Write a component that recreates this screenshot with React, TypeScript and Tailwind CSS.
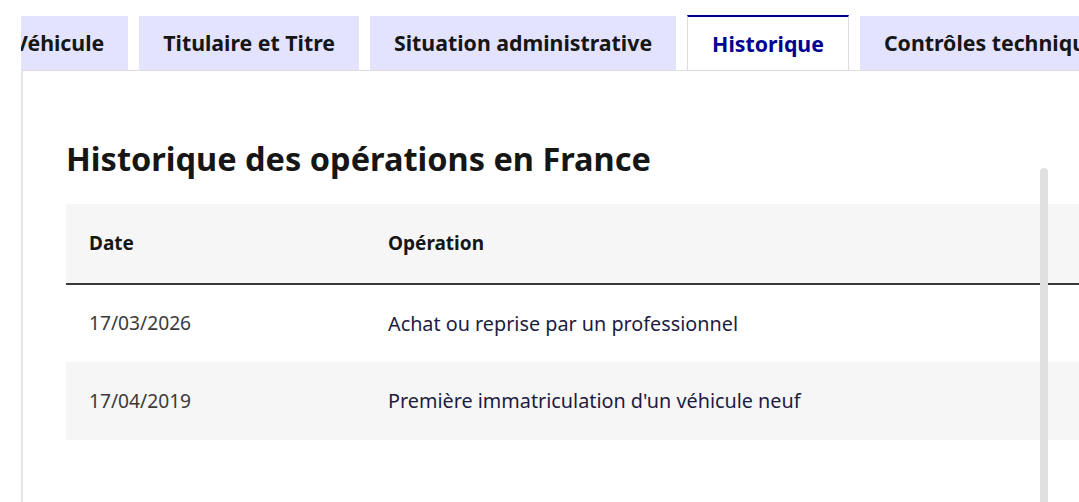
const tabs = [
  { label: "Véhicule", active: false },
  { label: "Titulaire et Titre", active: false },
  { label: "Situation administrative", active: false },
  { label: "Historique", active: true },
  { label: "Contrôles techniques", active: false },
];

const rows = [
  { date: "17/03/2026", op: "Achat ou reprise par un professionnel" },
  { date: "17/04/2019", op: "Première immatriculation d'un véhicule neuf" },
];

export default function App() {
  return (
    <div className="relative h-[502px] w-[1079px] overflow-hidden bg-white font-['Noto_Sans',sans-serif] text-[#161616]">
      <div className="ml-[21px] pt-[15px]">
        {/* tab list, scrolled to the left */}
        <div className="overflow-hidden">
          <div className="relative z-10 -ml-[31px] flex items-end gap-[11px] whitespace-nowrap">
            {tabs.map((t) =>
              t.active ? (
                <div
                  key={t.label}
                  className="-mb-px flex h-[56px] shrink-0 items-center border-x border-t-2 border-x-[#dddddd] border-t-[#000091] bg-white px-[24px] text-[21.3px] font-bold text-[#000091]"
                >
                  {t.label}
                </div>
              ) : (
                <div
                  key={t.label}
                  className="flex h-[54px] shrink-0 items-center bg-[#e3e3fd] px-[24px] text-[21.3px] font-bold text-[#161616]"
                >
                  {t.label}
                </div>
              )
            )}
          </div>
        </div>

        {/* panel */}
        <div className="h-[440px] border-l-2 border-t border-l-[#e5e5e5] border-t-[#dddddd] pl-[43px] pt-[64px]">
          <h2 className="text-[32.5px] font-bold leading-[48px] text-[#161616]">
            Historique des opérations en France
          </h2>
          <table className="mt-[21px] w-[1100px] border-collapse text-left">
            <thead>
              <tr className="h-[80px] border-b-2 border-[#3a3a3a] bg-[#f6f6f6]">
                <th className="w-[298px] pl-[23px] text-[19px] font-bold">Date</th>
                <th className="pl-[24px] text-[19px] font-bold">Opération</th>
              </tr>
            </thead>
            <tbody>
              {rows.map((r, i) => (
                <tr key={r.date} className={`h-[78px] ${i % 2 === 1 ? "bg-[#f6f6f6]" : "bg-white"}`}>
                  <td className="pl-[23px] text-[19.2px] text-[#3a3a3a]">{r.date}</td>
                  <td className="pl-[24px] text-[19.8px] text-[#1c1c42]">{r.op}</td>
                </tr>
              ))}
            </tbody>
          </table>
        </div>
      </div>

      {/* scrollbar */}
      <div className="absolute left-[1040px] top-[168px] h-[340px] w-[8px] rounded-t-full bg-[#e0e0e0]" />
    </div>
  );
}
